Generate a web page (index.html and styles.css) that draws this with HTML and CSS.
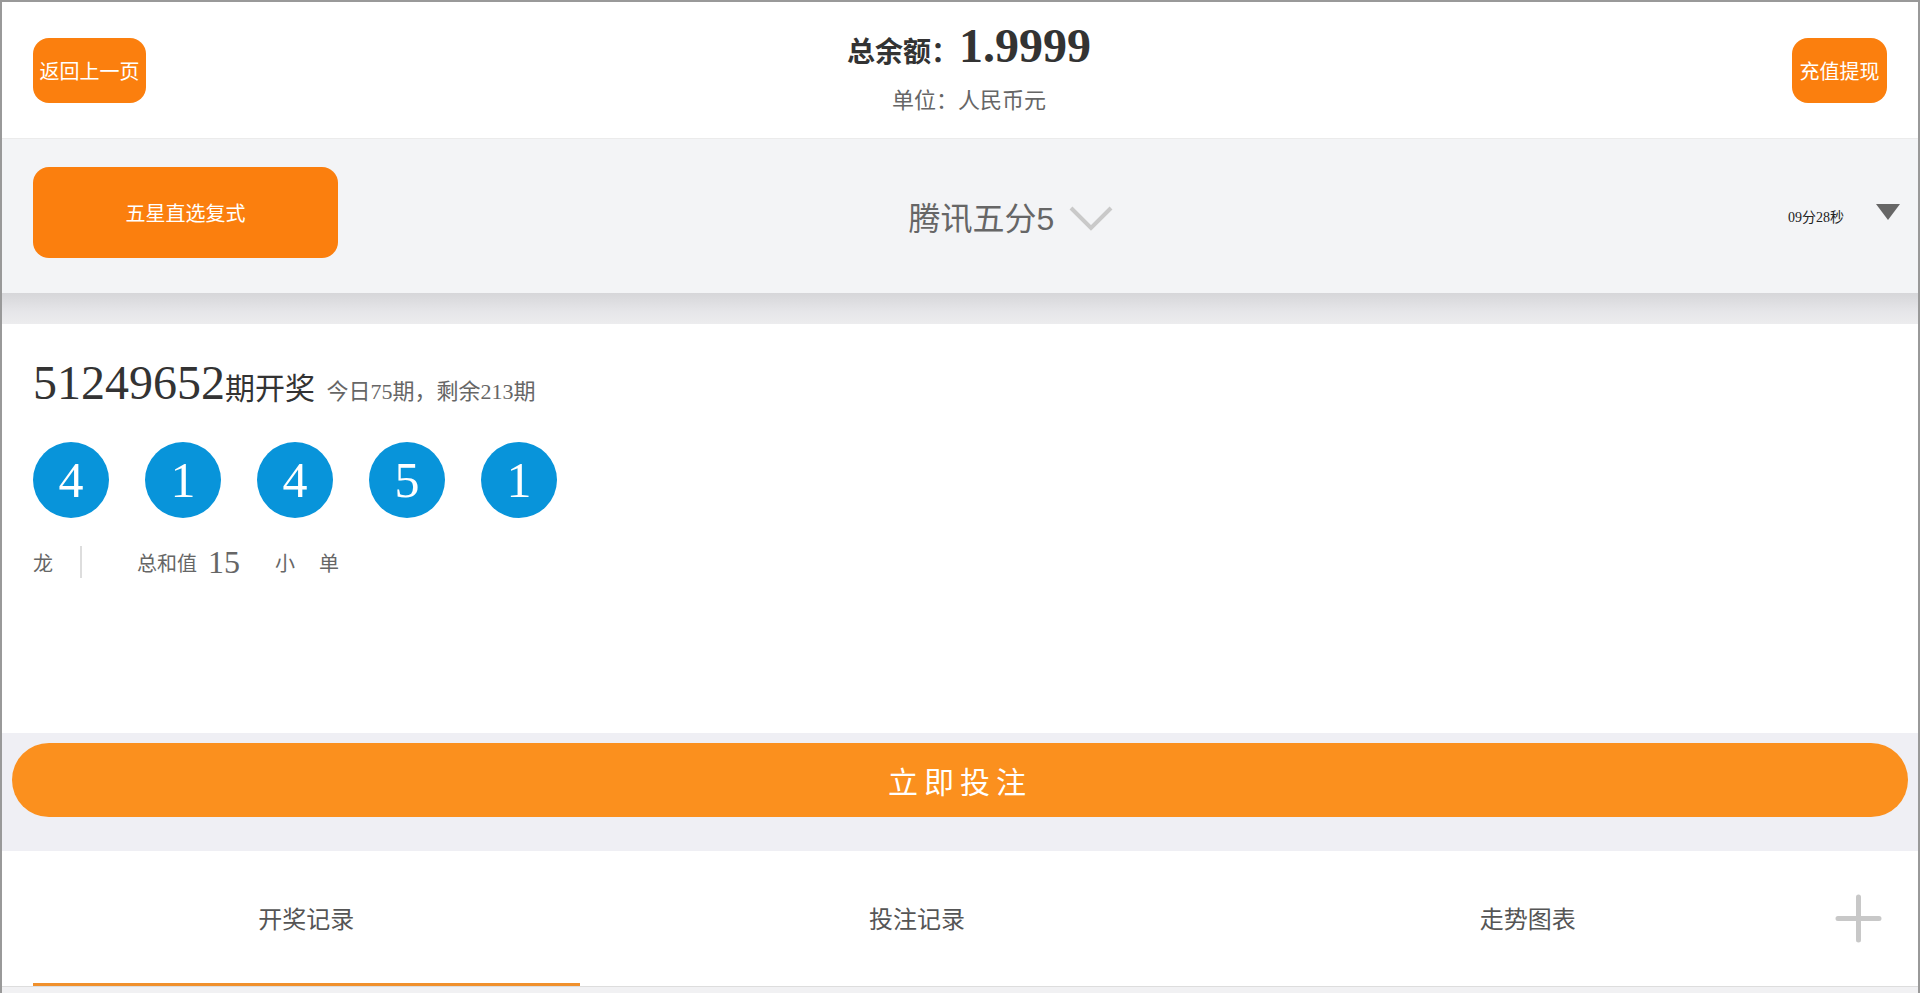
FILE: index.html
```html
<!DOCTYPE html>
<html lang="zh-CN">
  <head>
    <meta charset="UTF-8" />
    <meta name="viewport" content="width=device-width, initial-scale=1.0" />
    <title>腾讯五分5</title>
    <link rel="stylesheet" href="styles.css">
  </head>
  <body>
    <div class="page">
      <!-- 顶部：返回、余额、充值 -->
      <header class="topbar">
        <a class="btn btn-back" href="javascript:;">返回上一页</a>
        <div class="balance">
          <div class="balance-amount"><span class="balance-label">总余额：</span>1.9999</div>
          <div class="balance-tip">单位：人民币元</div>
        </div>
        <a class="btn btn-charge" href="javascript:;">充值提现</a>
      </header>

      <!-- 玩法 / 彩种 / 倒计时 -->
      <div class="gamebar">
        <a class="btn btn-play" href="javascript:;">五星直选复式</a>
        <div class="game-name">
          <span>腾讯五分5</span>
          <svg class="chevron" width="46" height="28" viewBox="0 0 46 28">
            <polyline points="3,4 23,24 43,4" fill="none" stroke="#c9c9c9" stroke-width="4" />
          </svg>
        </div>
        <div class="countdown">
          <span>09分28秒</span>
          <i class="tri"></i>
        </div>
      </div>
      <div class="bar-shadow"></div>

      <!-- 开奖结果 -->
      <section class="draw">
        <div class="issue">
          <b class="issue-no">51249652</b>期开奖
          <span class="issue-count">今日75期，剩余213期</span>
        </div>
        <ul class="balls">
          <li>4</li>
          <li>1</li>
          <li>4</li>
          <li>5</li>
          <li>1</li>
        </ul>
        <div class="stats">
          <span class="stat-dragon">龙</span>
          <i class="sep"></i>
          <span class="stat-label">总和值</span>
          <span class="stat-sum">15</span>
          <span class="stat-size">小</span>
          <span>单</span>
        </div>
      </section>

      <div class="action">
        <a class="bet-btn" href="javascript:;">立即投注</a>
      </div>

      <nav class="tabs">
        <a class="tab active" href="javascript:;"><span>开奖记录</span></a>
        <a class="tab" href="javascript:;"><span>投注记录</span></a>
        <a class="tab" href="javascript:;"><span>走势图表</span></a>
        <a class="tab-more" href="javascript:;">
          <svg width="49" height="49" viewBox="0 0 49 49">
            <path d="M4 24.5 H45 M24.5 3 V46" stroke="#c8c8c8" stroke-width="5" stroke-linecap="round" />
          </svg>
        </a>
      </nav>
    </div>
  </body>
</html>
```

FILE: styles.css
```css
* {
  margin: 0;
  padding: 0;
}
body {
  font-family: "Liberation Serif", "Noto Sans CJK SC", serif;
  color: #333;
}
a {
  text-decoration: none;
}
.page {
  width: 1920px;
  height: 993px;
  box-sizing: border-box;
  border: 2px solid #999;
  border-bottom: 0;
  background-color: #f1f1f3;
  overflow: hidden;
}
.btn {
  display: flex;
  align-items: center;
  justify-content: center;
  background-color: #fb7f0e;
  color: #fff;
  border-radius: 16px;
  font-family: "Noto Sans CJK SC", sans-serif;
  font-size: 20px;
}

/* 顶部 */
.topbar {
  display: flex;
  align-items: center;
  height: 136px;
  padding: 0 31px;
  background-color: #fff;
  border-bottom: 1px solid #ebebeb;
}
.btn-back {
  width: 113px;
  height: 65px;
}
.btn-charge {
  width: 95px;
  height: 65px;
}
.balance {
  flex: 1;
  align-self: flex-start;
  padding-top: 18px;
  text-align: center;
}
.balance-amount {
  font-size: 48px;
  line-height: 52px;
  font-weight: bold;
  color: #333;
}
.balance-label {
  font-size: 28px;
}
.balance-tip {
  margin-top: 2px;
  font-size: 22px;
  line-height: 40px;
  color: #666;
}

/* 玩法栏 */
.gamebar {
  display: flex;
  align-items: center;
  height: 154px;
  padding: 0 18px 0 31px;
  background-color: #f3f4f6;
}
.btn-play {
  width: 305px;
  height: 91px;
  margin-bottom: 7px;
}
.game-name {
  flex: 1;
  display: flex;
  align-items: center;
  justify-content: center;
  font-family: "Liberation Sans", "Noto Sans CJK SC", sans-serif;
  font-size: 32px;
  color: #666;
}
.chevron {
  margin-left: 14px;
  margin-top: 4px;
}
.countdown {
  width: 215px;
  display: flex;
  align-items: center;
  justify-content: flex-end;
  font-size: 14px;
  color: #222;
}
.tri {
  width: 0;
  height: 0;
  margin-left: 32px;
  margin-bottom: 8px;
  border-left: 12px solid transparent;
  border-right: 12px solid transparent;
  border-top: 16px solid #666;
}
.bar-shadow {
  height: 31px;
  background: linear-gradient(#d6d6d9, #e6e6e9 60%, #ececee);
}

/* 开奖 */
.draw {
  height: 378px;
  padding: 31px 31px 0;
  background-color: #fff;
}
.issue {
  line-height: 56px;
  font-size: 30px;
  color: #333;
}
.issue-no {
  font-weight: normal;
  font-size: 48px;
}
.issue-count {
  margin-left: 4px;
  font-size: 22px;
  color: #666;
}
.balls {
  display: flex;
  gap: 36px;
  margin-top: 22px;
  list-style: none;
}
.balls li {
  width: 76px;
  height: 76px;
  border-radius: 50%;
  background-color: #0894da;
  color: #fff;
  font-size: 50px;
  line-height: 76px;
  text-align: center;
}
.stats {
  display: flex;
  align-items: center;
  height: 32px;
  margin-top: 28px;
  font-size: 20px;
  color: #666;
}
.stat-dragon {
  margin-right: 27px;
}
.sep {
  width: 2px;
  height: 32px;
  margin-right: 55px;
  background-color: #ddd;
}
.stat-label {
  margin-right: 11px;
}
.stat-sum {
  margin-right: 35px;
  font-size: 32px;
}
.stat-size {
  margin-right: 24px;
}

/* 投注按钮 */
.action {
  padding: 10px 10px 34px;
  background-color: #efeff4;
}
.bet-btn {
  display: flex;
  align-items: center;
  justify-content: center;
  height: 74px;
  border-radius: 37px;
  background-color: #fb901e;
  color: #fff;
  font-family: "Noto Sans CJK SC", sans-serif;
  font-size: 30px;
  letter-spacing: 6px;
}

/* 底部标签 */
.tabs {
  display: grid;
  grid-template-columns: repeat(3, 1fr) 84px;
  height: 135px;
  background-color: #fff;
  border-bottom: 1px solid #ddd;
}
.tab {
  padding: 0 33px 0 31px;
  font-family: "Noto Sans CJK SC", sans-serif;
  font-size: 24px;
  color: #555;
}
.tab span {
  display: flex;
  align-items: center;
  justify-content: center;
  height: 100%;
  box-sizing: border-box;
  border-bottom: 3px solid transparent;
}
.tab.active span {
  border-bottom-color: #f0902c;
}
.tab-more {
  display: flex;
  align-items: center;
}
```
